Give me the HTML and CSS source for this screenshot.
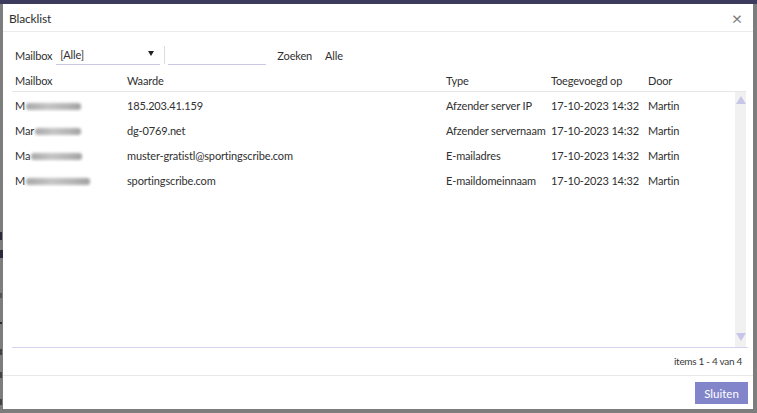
FILE: index.html
```html
<!DOCTYPE html>
<html lang="nl">
<head>
<meta charset="utf-8">
<title>Blacklist</title>
<link rel="stylesheet" href="styles.css">
</head>
<body>
<div class="topbar"></div>
<div class="stage">
  <div class="backdrop">
    <span class="mark m1"></span>
    <span class="mark m2"></span>
    <span class="mark m3"></span>
    <span class="mark m4"></span>
    <span class="mark m5"></span>
    <span class="mark m6"></span>
    <span class="mark m7"></span>
  </div>
  <div class="dialog">
    <div class="titlebar">
      <span class="title">Blacklist</span>
      <span class="close">&#215;</span>
    </div>
    <div class="content">
      <div class="toolbar">
        <span class="label">Mailbox</span>
        <div class="select"><span>[Alle]</span><span class="caret"></span></div>
        <div class="sep"></div>
        <div class="search"></div>
        <span class="tlink">Zoeken</span>
        <span class="tlink">Alle</span>
      </div>
      <div class="grid">
        <div class="row head">
          <div class="c c1">Mailbox</div>
          <div class="c c2">Waarde</div>
          <div class="c c3">Type</div>
          <div class="c c4">Toegevoegd op</div>
          <div class="c c5">Door</div>
        </div>
        <div class="gbody">
          <div class="rows">
            <div class="row">
              <div class="c c1">M<span class="blur b1"></span></div>
              <div class="c c2">185.203.41.159</div>
              <div class="c c3">Afzender server IP</div>
              <div class="c c4">17-10-2023 14:32</div>
              <div class="c c5">Martin</div>
            </div>
            <div class="row">
              <div class="c c1">Mar<span class="blur b2"></span></div>
              <div class="c c2">dg-0769.net</div>
              <div class="c c3">Afzender servernaam</div>
              <div class="c c4">17-10-2023 14:32</div>
              <div class="c c5">Martin</div>
            </div>
            <div class="row">
              <div class="c c1">Ma<span class="blur b3"></span></div>
              <div class="c c2">muster-gratistl@sportingscribe.com</div>
              <div class="c c3">E-mailadres</div>
              <div class="c c4">17-10-2023 14:32</div>
              <div class="c c5">Martin</div>
            </div>
            <div class="row">
              <div class="c c1">M<span class="blur b4"></span></div>
              <div class="c c2">sportingscribe.com</div>
              <div class="c c3">E-maildomeinnaam</div>
              <div class="c c4">17-10-2023 14:32</div>
              <div class="c c5">Martin</div>
            </div>
          </div>
          <div class="scrollbar">
            <span class="arrow up"></span>
            <span class="arrow down"></span>
          </div>
        </div>
        <div class="pager">items 1 - 4 van 4</div>
      </div>
    </div>
    <div class="footer">
      <button class="btn">Sluiten</button>
    </div>
  </div>
</div>
</body>
</html>
```
FILE: styles.css
```css
* { box-sizing: border-box; }
html, body { margin: 0; padding: 0; }
body {
  width: 757px;
  height: 413px;
  overflow: hidden;
  background: #7d7d7d;
  font-family: "Lato", "Noto Sans", sans-serif;
  font-size: 11px;
  letter-spacing: -0.15px;
  color: #303030;
}
.topbar {
  height: 4px;
  background: #3c3b5e;
}
.stage {
  display: flex;
  height: 409px;
  position: relative;
}
.backdrop {
  width: 3px;
  position: relative;
  overflow: hidden;
}
.mark {
  position: absolute;
  left: 0;
  width: 2px;
  height: 8px;
  background: #2a2a3a;
}
.m1 { top: 228px; }
.m2 { top: 246px; width: 3px; }
.m3 { top: 289px; height: 5px; background: #555; }
.m4 { top: 318px; height: 2px; }
.m5 { top: 345px; height: 6px; background: #444; }
.m6 { top: 368px; height: 6px; background: #444; }
.m7 { top: 395px; height: 6px; background: #444; }
.dialog {
  width: 750px;
  height: 405px;
  background: #fff;
  display: flex;
  flex-direction: column;
}
.titlebar {
  height: 28px;
  border-bottom: 1px solid #ececec;
  display: flex;
  align-items: center;
  justify-content: space-between;
  padding: 0 11px 0 6px;
  flex: none;
}
.title {
  font-size: 12px;
  color: #2e2e2e;
  margin-top: 1px;
}
.close {
  font-size: 18px;
  color: #7a7a7a;
  line-height: 1;
}
.content {
  flex: 1;
  padding: 12px 5px 0 9px;
  display: flex;
  flex-direction: column;
}
.toolbar {
  display: flex;
  align-items: center;
  height: 22px;
  padding-left: 3px;
}
.label { margin-right: 4px; }
.select {
  width: 104px;
  height: 20px;
  border-bottom: 1px solid #c9c7e6;
  display: flex;
  align-items: center;
  justify-content: space-between;
  padding: 0 6px 0 4px;
}
.caret {
  width: 0;
  height: 0;
  border-left: 3.5px solid transparent;
  border-right: 3.5px solid transparent;
  border-top: 5px solid #222;
  margin-top: -2px;
}
.sep {
  width: 1px;
  height: 18px;
  background: #dcdcdc;
  margin: 0 3px 0 4px;
}
.search {
  width: 98px;
  height: 20px;
  border-bottom: 1px solid #c9c7e6;
  margin-right: 11px;
}
.tlink { margin-right: 13px; }
.grid {
  margin-top: 4px;
  display: flex;
  flex-direction: column;
}
.row {
  display: flex;
  height: 25px;
  align-items: center;
}
.row.head {
  height: 22px;
  border-bottom: 1px solid #e6e6e6;
  margin-right: 2px;
}
.rows .row:first-child { margin-top: 1px; }
.c { padding-left: 3px; white-space: nowrap; overflow: hidden; display: flex; align-items: center; }
.c1 { width: 112px; }
.c2 { width: 319px; }
.c3 { width: 105px; }
.c4 { width: 97px; }
.c5 { width: 90px; }
.blur {
  display: inline-block;
  height: 7px;
  border-radius: 3px;
  background: linear-gradient(90deg, #a8a8a8, #c4c4c4 40%, #b4b4b4 75%, #a0a0a0);
  filter: blur(1.4px);
  margin-left: 1px;
  margin-top: 1px;
}
.b1 { width: 55px; }
.b2 { width: 46px; }
.b3 { width: 51px; }
.b4 { width: 64px; }
.gbody {
  height: 256px;
  display: flex;
  border-bottom: 1px solid #d4d2ec;
}
.rows {
  flex: 1;
}
.scrollbar {
  width: 12px;
  margin-right: 2px;
  background: #f1f1f1;
  display: flex;
  flex-direction: column;
  justify-content: space-between;
  align-items: center;
  padding: 4px 0 6px;
}
.arrow {
  width: 0;
  height: 0;
  border-left: 5px solid transparent;
  border-right: 5px solid transparent;
}
.arrow.up { border-bottom: 8px solid #c8c6e8; }
.arrow.down { border-top: 8px solid #c8c6e8; }
.pager {
  height: 26px;
  display: flex;
  align-items: center;
  justify-content: flex-end;
  padding-right: 6px;
  font-size: 10px;
  letter-spacing: -0.3px;
  color: #3a3a3a;
}
.footer {
  height: 34px;
  border-top: 1px solid #e8e8e8;
  display: flex;
  align-items: center;
  justify-content: flex-end;
  padding-right: 5px;
  flex: none;
}
.btn {
  width: 53px;
  height: 22px;
  border: none;
  background: #8385cb;
  color: #fff;
  font-family: inherit;
  font-size: 11.5px;
  padding: 0;
  margin-top: 1px;
}
```
